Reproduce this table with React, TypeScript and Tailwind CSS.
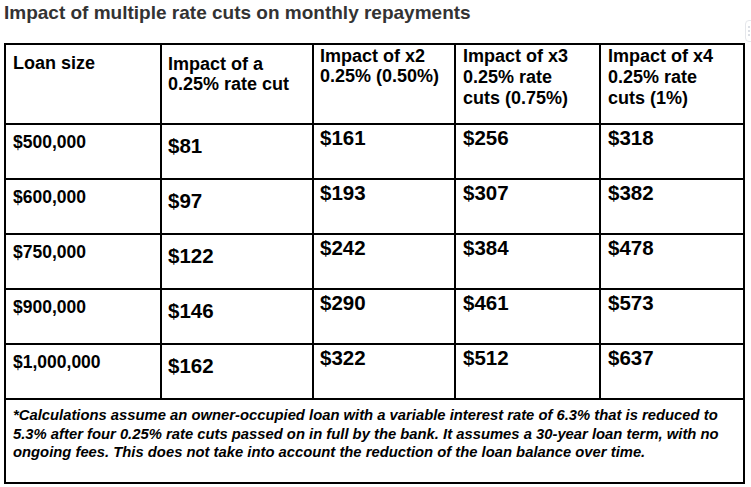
const rows = [
  ["$500,000", "$81", "$161", "$256", "$318"],
  ["$600,000", "$97", "$193", "$307", "$382"],
  ["$750,000", "$122", "$242", "$384", "$478"],
  ["$900,000", "$146", "$290", "$461", "$573"],
  ["$1,000,000", "$162", "$322", "$512", "$637"],
];

export default function App() {
  return (
    <div className="relative w-[751px] h-[487px] overflow-hidden bg-white text-black font-['Liberation_Sans',Arial,sans-serif]">
      <h1 className="h-[43px] pl-[4px] pt-[2px] text-[19px] leading-[22px] font-bold text-[#333]">
        Impact of multiple rate cuts on monthly repayments
      </h1>

      {/* little menu handle peeking in at the right edge */}
      <div className="absolute left-[745px] top-[20px] w-[14px] h-[22px] rounded-[4px] border border-gray-200 flex flex-col items-center justify-center gap-[2px] pr-[6px]">
        <span className="w-[2px] h-[2px] rounded-full bg-gray-300" />
        <span className="w-[2px] h-[2px] rounded-full bg-gray-300" />
        <span className="w-[2px] h-[2px] rounded-full bg-gray-300" />
      </div>

      <div className="ml-[4px] w-[741px] border-l-2 border-t-2 border-black grid grid-cols-[156px_152px_142px_145px_144px] font-bold">
        <div className="h-[80px] border-r-2 border-b-2 border-black pl-[7px] pt-[8px] text-[18px] leading-[20px]">
          Loan size
        </div>
        <div className="h-[80px] border-r-2 border-b-2 border-black pl-[6px] pt-[9px] text-[18px] leading-[20px]">
          Impact of a
          <br />
          0.25% rate cut
        </div>
        <div className="h-[80px] border-r-2 border-b-2 border-black pl-[6px] pt-[1px] text-[18px] leading-[20px]">
          Impact of x2
          <br />
          0.25% (0.50%)
        </div>
        <div className="h-[80px] border-r-2 border-b-2 border-black pl-[7px] pt-[1px] text-[18px] leading-[21px]">
          Impact of x3
          <br />
          0.25% rate
          <br />
          cuts (0.75%)
        </div>
        <div className="h-[80px] border-r-2 border-b-2 border-black pl-[7px] pt-[1px] text-[18px] leading-[21px]">
          Impact of x4
          <br />
          0.25% rate
          <br />
          cuts (1%)
        </div>

        {rows.map((r, i) => (
          <div key={i} className="contents">
            <div className="h-[55px] border-r-2 border-b-2 border-black pl-[7px] pt-[7px] text-[17.5px] leading-[20px]">
              {r[0]}
            </div>
            <div className="h-[55px] border-r-2 border-b-2 border-black pl-[6px] pt-[10px] text-[20.5px] leading-[22px]">
              {r[1]}
            </div>
            <div className="h-[55px] border-r-2 border-b-2 border-black pl-[6px] pt-[2px] text-[20.5px] leading-[22px]">
              {r[2]}
            </div>
            <div className="h-[55px] border-r-2 border-b-2 border-black pl-[7px] pt-[2px] text-[20.5px] leading-[22px]">
              {r[3]}
            </div>
            <div className="h-[55px] border-r-2 border-b-2 border-black pl-[7px] pt-[2px] text-[20.5px] leading-[22px]">
              {r[4]}
            </div>
          </div>
        ))}

        <div className="col-span-5 h-[84px] border-r-2 border-b-2 border-black pl-[7px] pt-[6px] text-[14.8px] leading-[18.5px] italic">
          *Calculations assume an owner-occupied loan with a variable interest rate of 6.3% that is reduced to
          <br />
          5.3% after four 0.25% rate cuts passed on in full by the bank. It assumes a 30-year loan term, with no
          <br />
          ongoing fees. This does not take into account the reduction of the loan balance over time.
        </div>
      </div>
    </div>
  );
}
